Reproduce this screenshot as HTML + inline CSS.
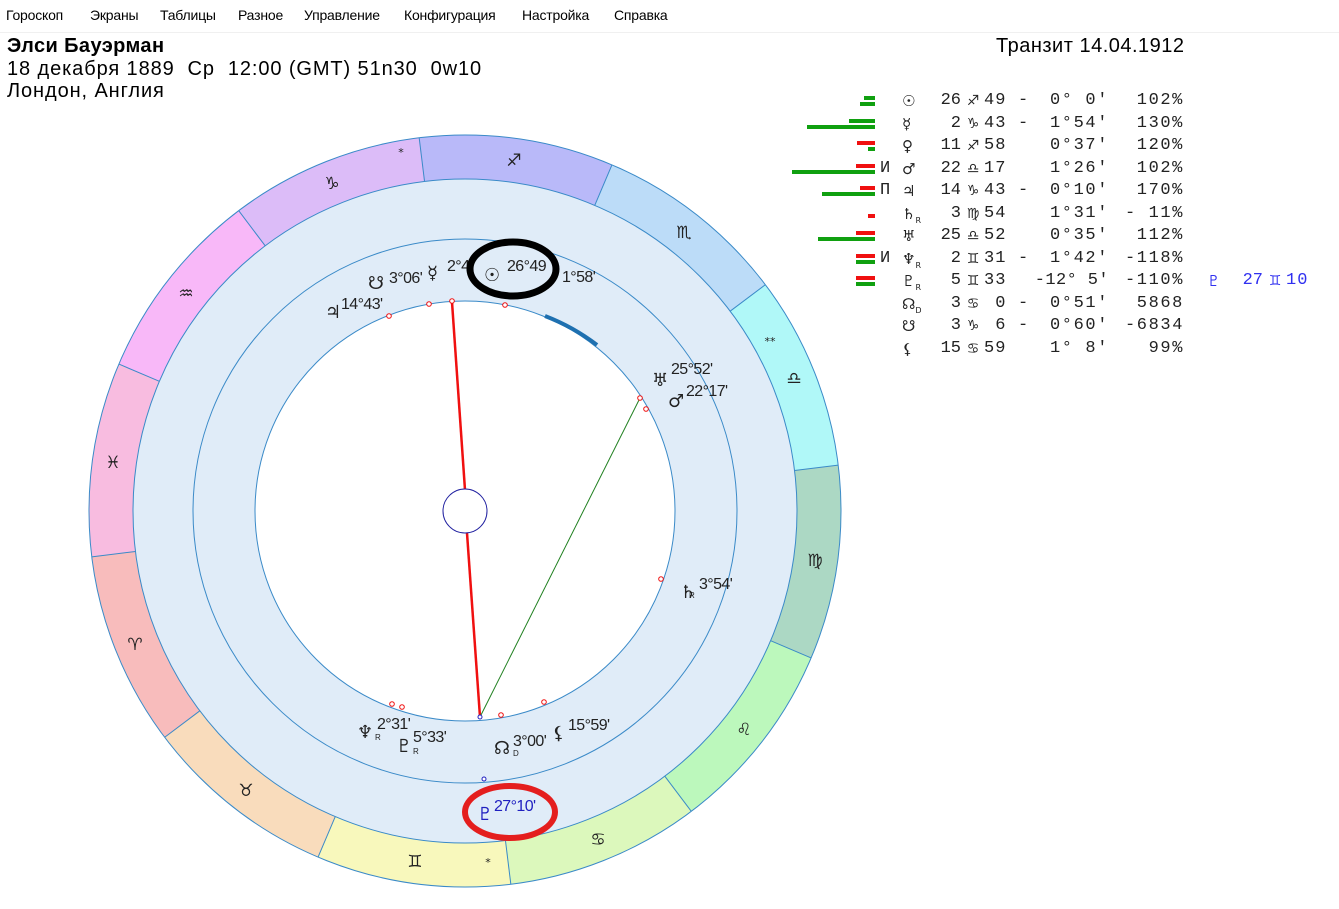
<!DOCTYPE html>
<html><head><meta charset="utf-8">
<style>
body{margin:0;width:1339px;height:909px;background:#fff;position:relative;overflow:hidden;font-family:"Liberation Sans","DejaVu Sans",sans-serif;color:#000}
.menu{position:absolute;top:0;left:0;width:1339px;height:32px;border-bottom:1px solid #f0f0f0}
.menu span{position:absolute;top:7px;font-size:14px;letter-spacing:-0.2px}
.h{position:absolute;font-size:20px;white-space:nowrap;letter-spacing:0.9px}
.r{position:absolute;left:938px;height:20px;font-family:"Liberation Mono","DejaVu Sans Mono",monospace;font-size:17px;color:#222;white-space:nowrap;line-height:20px}
.r span{position:absolute;top:0}
.d{left:0;width:23px;text-align:right}
.s{left:24px;width:22px;text-align:center;font-family:"DejaVu Sans",sans-serif;font-size:14px}
.m{left:46px;width:27px;letter-spacing:1px}
.x{left:80px}
.a{left:100px;width:71px;text-align:right;letter-spacing:1.6px}
.p{left:170px;width:76px;text-align:right;letter-spacing:1.6px}
.g{position:absolute;font-family:"DejaVu Sans",sans-serif;font-size:15px;line-height:20px;color:#222}
.g sub{font-size:8px}
.t{position:absolute;font-family:"Liberation Mono",monospace;font-size:17px;color:#222;line-height:20px}
.bar{position:absolute;height:4px}
.gr{background:#10a010}.rd{background:#f01010}
</style></head><body>
<div class="menu">
<span style="left:6px">Гороскоп</span><span style="left:90px">Экраны</span><span style="left:160px">Таблицы</span><span style="left:238px">Разное</span><span style="left:304px">Управление</span><span style="left:404px">Конфигурация</span><span style="left:522px">Настройка</span><span style="left:614px">Справка</span>
</div>
<div class="h" style="left:7px;top:35px;font-weight:bold;letter-spacing:0.4px">Элси Бауэрман</div>
<div class="h" style="left:7px;top:58px">18 декабря 1889&nbsp; Ср&nbsp; 12:00 (GMT) 51n30&nbsp; 0w10</div>
<div class="h" style="left:7px;top:80px">Лондон, Англия</div>
<div class="h" style="left:996px;top:35px;letter-spacing:0.5px">Транзит 14.04.1912</div>

<div class="bar gr" style="left:864px;width:11px;top:96px"></div><div class="bar gr" style="left:860px;width:15px;top:102px"></div>
<div class="bar gr" style="left:849px;width:26px;top:119px"></div><div class="bar gr" style="left:807px;width:68px;top:125px"></div>
<div class="bar rd" style="left:857px;width:18px;top:141px"></div><div class="bar gr" style="left:868px;width:7px;top:147px"></div>
<div class="bar rd" style="left:856px;width:19px;top:164px"></div><div class="bar gr" style="left:792px;width:83px;top:170px"></div>
<div class="bar rd" style="left:860px;width:15px;top:186px"></div><div class="bar gr" style="left:822px;width:53px;top:192px"></div>
<div class="bar rd" style="left:868px;width:7px;top:214px"></div>
<div class="bar rd" style="left:856px;width:19px;top:231px"></div><div class="bar gr" style="left:818px;width:57px;top:237px"></div>
<div class="bar rd" style="left:856px;width:19px;top:254px"></div><div class="bar gr" style="left:856px;width:19px;top:260px"></div>
<div class="bar rd" style="left:856px;width:19px;top:276px"></div><div class="bar gr" style="left:856px;width:19px;top:282px"></div>
<div class="t" style="left:880px;top:159px">И</div>
<div class="t" style="left:880px;top:181px">П</div>
<div class="t" style="left:880px;top:249px">И</div>

<div class="g" style="left:902px;top:91px">☉</div><div class="r" style="top:91px"><span class="d">26</span><span class="s">♐</span><span class="m">49</span><span class="x">-</span><span class="a">0° 0'</span><span class="p">102%</span></div>
<div class="g" style="left:902px;top:114px">☿</div><div class="r" style="top:114px"><span class="d">2</span><span class="s">♑</span><span class="m">43</span><span class="x">-</span><span class="a">1°54'</span><span class="p">130%</span></div>
<div class="g" style="left:902px;top:136px">♀</div><div class="r" style="top:136px"><span class="d">11</span><span class="s">♐</span><span class="m">58</span><span class="a">0°37'</span><span class="p">120%</span></div>
<div class="g" style="left:902px;top:159px">♂</div><div class="r" style="top:159px"><span class="d">22</span><span class="s">♎</span><span class="m">17</span><span class="a">1°26'</span><span class="p">102%</span></div>
<div class="g" style="left:902px;top:181px">♃</div><div class="r" style="top:181px"><span class="d">14</span><span class="s">♑</span><span class="m">43</span><span class="x">-</span><span class="a">0°10'</span><span class="p">170%</span></div>
<div class="g" style="left:902px;top:204px">♄<sub>R</sub></div><div class="r" style="top:204px"><span class="d">3</span><span class="s">♍</span><span class="m">54</span><span class="a">1°31'</span><span class="p">- 11%</span></div>
<div class="g" style="left:902px;top:226px">♅</div><div class="r" style="top:226px"><span class="d">25</span><span class="s">♎</span><span class="m">52</span><span class="a">0°35'</span><span class="p">112%</span></div>
<div class="g" style="left:902px;top:249px">♆<sub>R</sub></div><div class="r" style="top:249px"><span class="d">2</span><span class="s">♊</span><span class="m">31</span><span class="x">-</span><span class="a">1°42'</span><span class="p">-118%</span></div>
<div class="g" style="left:902px;top:271px">♇<sub>R</sub></div><div class="r" style="top:271px"><span class="d">5</span><span class="s">♊</span><span class="m">33</span><span style="left:84px;width:87px;text-align:right;letter-spacing:0.4px">-12° 5'</span><span class="p">-110%</span></div>
<div class="g" style="left:1207px;top:271px;color:#3030f0">♇</div><div class="r" style="left:1240px;top:271px;color:#3030f0"><span class="d">27</span><span class="s">♊</span><span class="m">10</span></div>
<div class="g" style="left:902px;top:294px">☊<sub>D</sub></div><div class="r" style="top:294px"><span class="d">3</span><span class="s">♋</span><span class="m">&nbsp;0</span><span class="x">-</span><span class="a">0°51'</span><span class="p">5868</span></div>
<div class="g" style="left:902px;top:316px">☋</div><div class="r" style="top:316px"><span class="d">3</span><span class="s">♑</span><span class="m">&nbsp;6</span><span class="x">-</span><span class="a">0°60'</span><span class="p">-6834</span></div>
<div class="g" style="left:902px;top:339px">⚸</div><div class="r" style="top:339px"><span class="d">15</span><span class="s">♋</span><span class="m">59</span><span class="a">1° 8'</span><span class="p">99%</span></div>

<svg width="1339" height="909" style="position:absolute;left:0;top:0" font-family="Liberation Sans, DejaVu Sans, sans-serif">
<g transform="translate(465,511)">
<circle r="354" fill="none" stroke="#b9b9f9" stroke-width="44" stroke-dasharray="185.35 3000" transform="rotate(-97)"/>
<circle r="354" fill="none" stroke="#dcbcf8" stroke-width="44" stroke-dasharray="185.35 3000" transform="rotate(-127)"/>
<circle r="354" fill="none" stroke="#f8b8f8" stroke-width="44" stroke-dasharray="185.35 3000" transform="rotate(-157)"/>
<circle r="354" fill="none" stroke="#f8bce0" stroke-width="44" stroke-dasharray="185.35 3000" transform="rotate(-187)"/>
<circle r="354" fill="none" stroke="#f8bcbc" stroke-width="44" stroke-dasharray="185.35 3000" transform="rotate(-217)"/>
<circle r="354" fill="none" stroke="#f9dcbc" stroke-width="44" stroke-dasharray="185.35 3000" transform="rotate(-247)"/>
<circle r="354" fill="none" stroke="#f8f8bc" stroke-width="44" stroke-dasharray="185.35 3000" transform="rotate(-277)"/>
<circle r="354" fill="none" stroke="#dcf8bc" stroke-width="44" stroke-dasharray="185.35 3000" transform="rotate(-307)"/>
<circle r="354" fill="none" stroke="#bcf8bc" stroke-width="44" stroke-dasharray="185.35 3000" transform="rotate(-337)"/>
<circle r="354" fill="none" stroke="#acd8c4" stroke-width="44" stroke-dasharray="185.35 3000" transform="rotate(-7)"/>
<circle r="354" fill="none" stroke="#b0f8f8" stroke-width="44" stroke-dasharray="185.35 3000" transform="rotate(-37)"/>
<circle r="354" fill="none" stroke="#bcdcf8" stroke-width="44" stroke-dasharray="185.35 3000" transform="rotate(-67)"/>
<g stroke="#3a8ac8" stroke-width="1">
<line x1="332" x2="376" transform="rotate(-97)"/><line x1="332" x2="376" transform="rotate(-127)"/><line x1="332" x2="376" transform="rotate(-157)"/><line x1="332" x2="376" transform="rotate(-187)"/><line x1="332" x2="376" transform="rotate(-217)"/><line x1="332" x2="376" transform="rotate(-247)"/><line x1="332" x2="376" transform="rotate(-277)"/><line x1="332" x2="376" transform="rotate(-307)"/><line x1="332" x2="376" transform="rotate(-337)"/><line x1="332" x2="376" transform="rotate(-7)"/><line x1="332" x2="376" transform="rotate(-37)"/><line x1="332" x2="376" transform="rotate(-67)"/>
</g>
<circle r="376" fill="none" stroke="#3a8ac8"/>
<circle r="332" fill="#e0ecf8" stroke="#3a8ac8"/>
<circle r="272" fill="none" stroke="#3a8ac8"/>
<circle r="210" fill="#fff" stroke="#3a8ac8"/>
</g>
<g font-family="DejaVu Sans, sans-serif" font-size="17" fill="#222" text-anchor="middle">
<text x="514" y="166">♐</text><text x="332" y="189">♑</text><text x="186" y="299">♒</text><text x="113" y="468">♓</text><text x="135" y="650">♈</text><text x="246" y="796">♉</text><text x="415" y="867">♊</text><text x="598" y="845">♋</text><text x="744" y="735">♌</text><text x="815" y="566">♍</text><text x="794" y="384">♎</text><text x="684" y="238">♏</text>
<text x="401" y="156" font-size="11">*</text><text x="488" y="866" font-size="11">*</text><text x="770" y="345" font-size="11">**</text>
</g>
<path d="M545 316 A210 210 0 0 1 597 345" fill="none" stroke="#1e70b0" stroke-width="4"/>
<line x1="452" y1="302" x2="465" y2="490" stroke="#f01010" stroke-width="2.5"/>
<line x1="467" y1="533" x2="480" y2="717" stroke="#f01010" stroke-width="2.5"/>
<line x1="640" y1="398" x2="480" y2="717" stroke="#208020" stroke-width="1"/>
<circle cx="465" cy="511" r="22" fill="#fff" stroke="#2020a0" stroke-width="1"/>
<g fill="#fff" stroke="#f01010" stroke-width="1">
<circle cx="389" cy="316" r="2.3"/><circle cx="429" cy="304" r="2.3"/><circle cx="452" cy="301" r="2.3"/><circle cx="505" cy="305" r="2.3"/><circle cx="640" cy="398" r="2.3"/><circle cx="646" cy="409" r="2.3"/><circle cx="661" cy="579" r="2.3"/><circle cx="392" cy="704" r="2.3"/><circle cx="402" cy="707" r="2.3"/><circle cx="501" cy="715" r="2.3"/><circle cx="544" cy="702" r="2.3"/>
</g>
<circle cx="480" cy="717" r="2" fill="#fff" stroke="#2020c0"/><circle cx="484" cy="779" r="2" fill="#fff" stroke="#2020c0"/>
<g font-size="16" fill="#222" letter-spacing="-0.6">
<text x="389" y="283">3°06'</text><text x="447" y="271">2°4</text><text x="507" y="271">26°49</text><text x="562" y="282">1°58'</text>
<text x="341" y="309">14°43'</text><text x="671" y="374">25°52'</text><text x="686" y="396">22°17'</text><text x="699" y="589">3°54'</text>
<text x="377" y="729">2°31'</text><text x="413" y="742">5°33'</text><text x="513" y="746">3°00'</text><text x="568" y="730">15°59'</text>
<text x="494" y="811" fill="#2020c0">27°10'</text>
</g>
<g font-family="DejaVu Sans, sans-serif" font-size="18" fill="#222">
<text x="368" y="289">☋</text><text x="427" y="279">☿</text><text x="484" y="281">☉</text><text x="325" y="318">♃</text><text x="652" y="386">♅</text><text x="668" y="407">♂</text><text x="680" y="598">♄</text>
<text x="357" y="738">♆</text><text x="396" y="752">♇</text><text x="494" y="754">☊</text><text x="552" y="739">⚸</text>
<text x="477" y="820" fill="#2020c0">♇</text>
</g>
<g font-size="8" fill="#222"><text x="689" y="598">R</text><text x="375" y="740">R</text><text x="413" y="754">R</text><text x="513" y="756">D</text></g>
<ellipse cx="513" cy="269" rx="43" ry="27" fill="none" stroke="#000" stroke-width="7"/>
<ellipse cx="510" cy="812" rx="45" ry="26" fill="none" stroke="#e41e1e" stroke-width="6"/>
</svg>
</body></html>
